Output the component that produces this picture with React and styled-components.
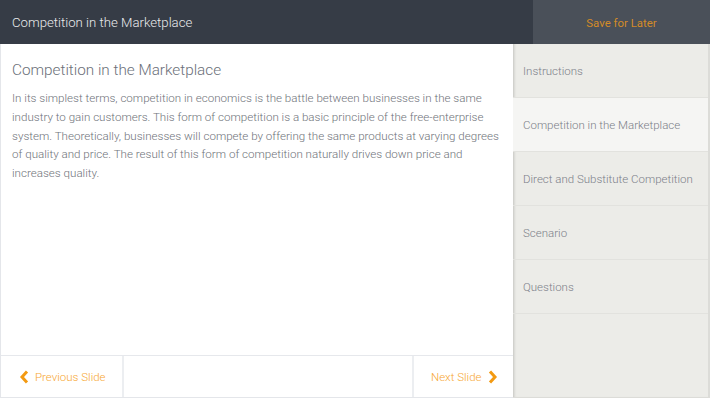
import React from 'react'
import styled, { createGlobalStyle } from 'styled-components'

const GlobalStyle = createGlobalStyle`
  html, body {
    margin: 0;
    padding: 0;
    background: #ffffff;
  }
  body {
    font-family: Roboto, 'Liberation Sans', sans-serif;
    font-weight: 300;
  }
`

const Page = styled.div`
  width: 710px;
  height: 398px;
  display: flex;
  flex-direction: column;
  overflow: hidden;
`

const Header = styled.header`
  height: 44px;
  display: flex;
  background: #363c46;
  flex-shrink: 0;
`

const HeaderTitle = styled.div`
  flex: 1;
  display: flex;
  align-items: center;
  padding-left: 12px;
  font-size: 13.2px;
  font-weight: 300;
  color: #e9eaec;
`

const SaveButton = styled.div`
  width: 177px;
  display: flex;
  align-items: center;
  justify-content: center;
  padding-top: 2px;
  background: #4a5059;
  color: #d38b28;
  font-size: 11.4px;
  font-weight: 400;
`

const Body = styled.div`
  flex: 1;
  display: flex;
  min-height: 0;
`

const Main = styled.div`
  width: 513px;
  display: flex;
  flex-direction: column;
  border-left: 1px solid #e4e6ea;
  box-sizing: border-box;
  border-bottom: 1px solid #e4e6ea;
`

const Content = styled.div`
  flex: 1;
  padding: 17px 12px 0 11px;
`

const Heading = styled.h1`
  margin: 0 0 10px;
  font-size: 15.3px;
  font-weight: 300;
  color: #6b7079;
`

const Text = styled.p`
  margin: 0;
  font-size: 11.6px;
  line-height: 18.8px;
  color: #6f737a;
`

const Footer = styled.div`
  height: 41px;
  display: flex;
  border-top: 1px solid #e6e8ec;
`

const NavButton = styled.div`
  display: flex;
  align-items: center;
  gap: 6px;
  font-size: 11.5px;
  color: #f7a731;
  box-sizing: border-box;
  width: ${p => p.$width}px;
  padding-left: ${p => p.$pad}px;
  ${p => (p.$side === 'left' ? 'border-right' : 'border-left')}: 2px solid #eceef1;
`

const Spacer = styled.div`
  flex: 1;
`

const Sidebar = styled.nav`
  flex: 1;
  background: #ecece8;
  box-shadow: inset 3px 0 3px -2px rgba(0, 0, 0, 0.18);
  border-right: 2px solid #dcdcd8;
  border-bottom: 1px solid #dcdcd8;
  display: flex;
  flex-direction: column;
`

const NavItem = styled.div`
  height: 53px;
  display: flex;
  align-items: center;
  padding-left: 10px;
  font-size: 11.5px;
  color: #7c8088;
  border-bottom: 1px solid #e2e2de;
  background: ${p => (p.$active ? '#f5f5f3' : 'transparent')};
`

const Chevron = ({ dir }) => (
  <svg width="10" height="14" viewBox="0 0 10 14">
    <path
      d={dir === 'left' ? 'M8 1.5 L3 7 L8 12.5' : 'M2 1.5 L7 7 L2 12.5'}
      fill="none"
      stroke="#f39a12"
      strokeWidth="3"
      strokeLinejoin="miter"
    />
  </svg>
)

const sections = [
  'Instructions',
  'Competition in the Marketplace',
  'Direct and Substitute Competition',
  'Scenario',
  'Questions'
]

export default function App () {
  return (
    <Page>
      <GlobalStyle />
      <Header>
        <HeaderTitle>Competition in the Marketplace</HeaderTitle>
        <SaveButton>Save for Later</SaveButton>
      </Header>
      <Body>
        <Main>
          <Content>
            <Heading>Competition in the Marketplace</Heading>
            <Text>
              In its simplest terms, competition in economics is the battle between businesses in the same
              industry to gain customers. This form of competition is a basic principle of the free-enterprise
              system. Theoretically, businesses will compete by offering the same products at varying degrees
              of quality and price. The result of this form of competition naturally drives down price and
              increases quality.
            </Text>
          </Content>
          <Footer>
            <NavButton $side='left' $width={123} $pad={18}>
              <Chevron dir='left' />
              Previous Slide
            </NavButton>
            <Spacer />
            <NavButton $side='right' $width={101} $pad={17}>
              Next Slide
              <Chevron dir='right' />
            </NavButton>
          </Footer>
        </Main>
        <Sidebar>
          {sections.map((s, i) => (
            <NavItem key={s} $active={i === 1}>{s}</NavItem>
          ))}
        </Sidebar>
      </Body>
    </Page>
  )
}
